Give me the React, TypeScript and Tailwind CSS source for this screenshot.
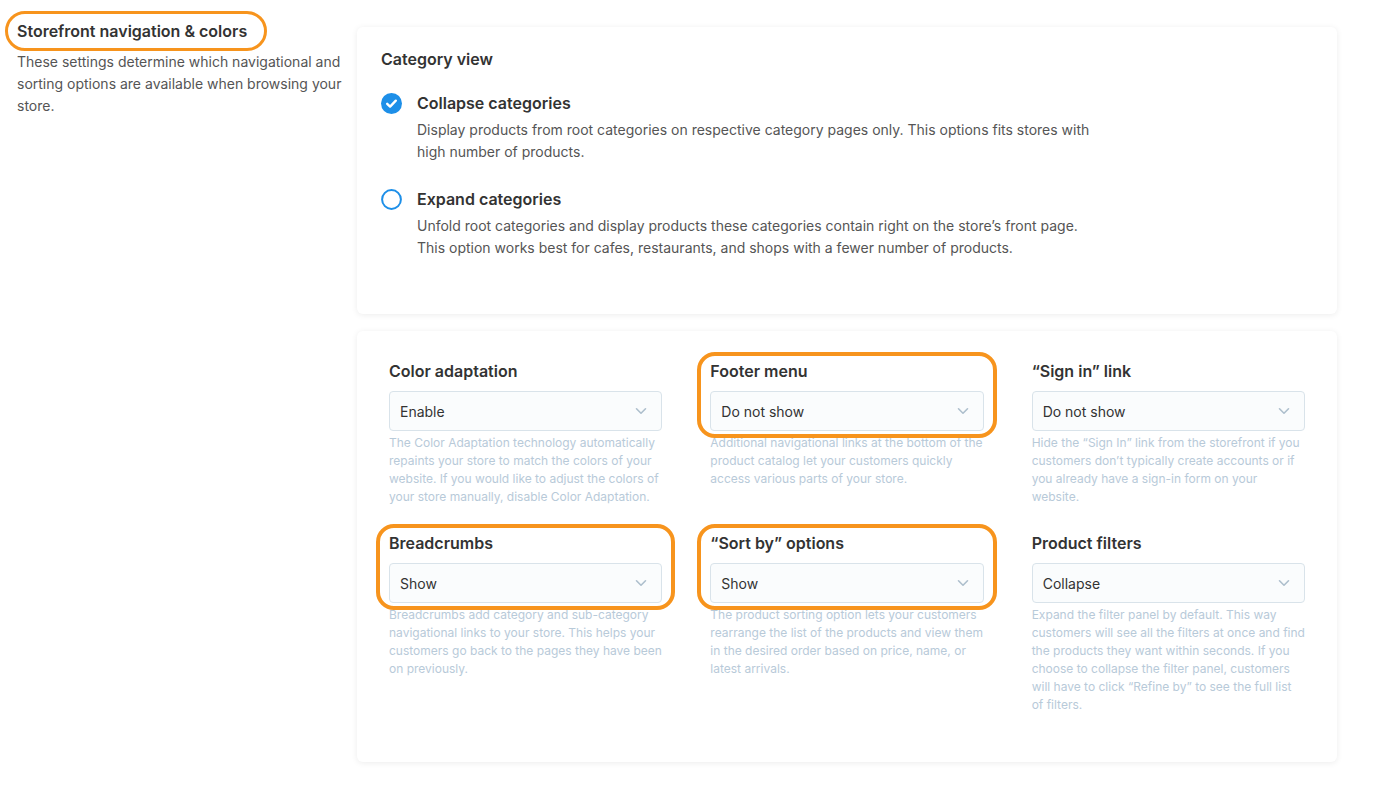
import React from "react";

const font = { fontFamily: "Inter, 'Noto Sans', 'Liberation Sans', sans-serif" };

type Field = {
  label: string;
  value: string;
  help: string;
  highlight?: boolean;
};

const fields: Field[] = [
  {
    label: "Color adaptation",
    value: "Enable",
    help: "The Color Adaptation technology automatically repaints your store to match the colors of your website. If you would like to adjust the colors of your store manually, disable Color Adaptation.",
  },
  {
    label: "Footer menu",
    value: "Do not show",
    help: "Additional navigational links at the bottom of the product catalog let your customers quickly access various parts of your store.",
    highlight: true,
  },
  {
    label: "\u201cSign in\u201d link",
    value: "Do not show",
    help: "Hide the \u201cSign In\u201d link from the storefront if you customers don\u2019t typically create accounts or if you already have a sign-in form on your website.",
  },
  {
    label: "Breadcrumbs",
    value: "Show",
    help: "Breadcrumbs add category and sub-category navigational links to your store. This helps your customers go back to the pages they have been on previously.",
    highlight: true,
  },
  {
    label: "\u201cSort by\u201d options",
    value: "Show",
    help: "The product sorting option lets your customers rearrange the list of the products and view them in the desired order based on price, name, or latest arrivals.",
    highlight: true,
  },
  {
    label: "Product filters",
    value: "Collapse",
    help: "Expand the filter panel by default. This way customers will see all the filters at once and find the products they want within seconds. If you choose to collapse the filter panel, customers will have to click \u201cRefine by\u201d to see the full list of filters.",
  },
];

const Chevron = () => (
  <svg width="12" height="8" viewBox="0 0 12 8" fill="none">
    <path d="M1.5 1.75 6 6.25l4.5-4.5" stroke="#aebfcd" strokeWidth="1.6" strokeLinecap="round" strokeLinejoin="round" />
  </svg>
);

const RadioChecked = () => (
  <svg width="21" height="21" viewBox="0 0 21 21">
    <circle cx="10.5" cy="10.5" r="10.5" fill="#1d8fe8" />
    <path d="M6.2 10.8 9.1 13.6 14.8 7.7" stroke="#fff" strokeWidth="2.4" fill="none" strokeLinecap="round" strokeLinejoin="round" />
  </svg>
);

const RadioEmpty = () => (
  <svg width="21" height="21" viewBox="0 0 21 21">
    <circle cx="10.5" cy="10.5" r="9.4" fill="none" stroke="#1d8fe8" strokeWidth="2" />
  </svg>
);

const SelectField = ({ field }: { field: Field }) => (
  <div className="flex flex-col">
    <div className="relative flex flex-col">
      {/* Highlight ring */}
      {field.highlight && (
        <span className="pointer-events-none absolute -left-[13px] -right-[13px] -top-[7px] -bottom-[7px] rounded-[18px] border-[4px] border-[#f7941d]" />
      )}
      <span className="text-[16px] leading-[24px] font-semibold text-[#333]">{field.label}</span>
      <div className="mt-2 flex h-10 items-center justify-between rounded-[4px] border border-[#d9e3ea] bg-[#fafcfd] pl-[10px] pr-[14px]">
        <span className="text-[14px] text-[#333]">{field.value}</span>
        <Chevron />
      </div>
    </div>
    <p className="mt-[3px] text-[12px] leading-[18px] text-[#b8cad9]">{field.help}</p>
  </div>
);

export default function App() {
  return (
    <div className="flex min-h-screen bg-white" style={font}>
      {/* Left column */}
      <div className="w-[357px] shrink-0 pl-[17px] pt-[19px]">
        <div className="relative inline-block">
          <span className="pointer-events-none absolute -left-[12px] -right-[20px] -top-[8px] -bottom-[8px] rounded-full border-[3px] border-[#f7941d]" />
          <h2 className="text-[16px] leading-[24px] font-semibold text-[#333]">Storefront navigation &amp; colors</h2>
        </div>
        <p className="mt-2 w-[330px] text-[14px] leading-[22px] text-[#555]">
          These settings determine which navigational and sorting options are available when browsing your store.
        </p>
      </div>

      {/* Right column */}
      <div className="flex w-[980px] flex-col gap-[17px] pt-[27px]">
        {/* Category view */}
        <div className="rounded-[6px] bg-white px-6 pt-5 pb-[55px] shadow-[0_1px_6px_rgba(0,0,0,0.08)]">
          <h3 className="text-[16px] leading-[24px] font-semibold text-[#333]">Category view</h3>
          <div className="mt-5 flex flex-col gap-6">
            <div className="flex gap-[15px]">
              <div className="pt-[2px]">
                <RadioChecked />
              </div>
              <div>
                <div className="text-[16px] leading-[24px] font-semibold text-[#333]">Collapse categories</div>
                <p className="mt-1 text-[14px] leading-[22px] text-[#555]">
                  Display products from root categories on respective category pages only. This options fits stores with
                  <br />
                  high number of products.
                </p>
              </div>
            </div>
            <div className="flex gap-[15px]">
              <div className="pt-[2px]">
                <RadioEmpty />
              </div>
              <div>
                <div className="text-[16px] leading-[24px] font-semibold text-[#333]">Expand categories</div>
                <p className="mt-1 text-[14px] leading-[22px] text-[#555]">
                  Unfold root categories and display products these categories contain right on the store’s front page.
                  <br />
                  This option works best for cafes, restaurants, and shops with a fewer number of products.
                </p>
              </div>
            </div>
          </div>
        </div>

        {/* Settings grid */}
        <div className="rounded-[6px] bg-white px-8 pt-7 pb-12 shadow-[0_1px_6px_rgba(0,0,0,0.08)]">
          <div className="grid grid-cols-3 gap-x-12 gap-y-[25px]">
            {fields.map((f) => (
              <SelectField key={f.label} field={f} />
            ))}
          </div>
        </div>
      </div>
    </div>
  );
}
